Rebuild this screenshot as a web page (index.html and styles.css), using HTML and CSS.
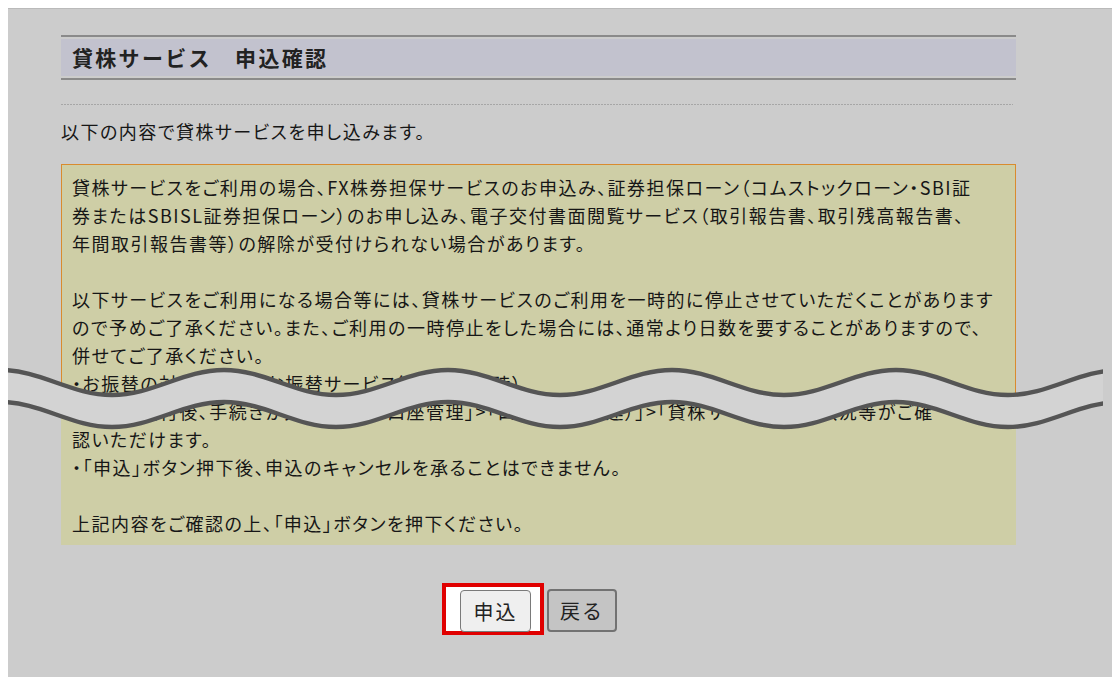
FILE: index.html
```html
<!DOCTYPE html>
<html lang="ja">
<head>
    <meta charset="UTF-8">
    <meta name="viewport" content="width=device-width, initial-scale=1.0">
    <title>貸株サービス 申込確認</title>
    <link rel="stylesheet" href="styles.css">
</head>
<body>
    <div class="page">
        <div class="content">
            <div class="title-bar">
                <h1>貸株サービス　申込確認</h1>
            </div>
            <div class="divider"></div>
            <p class="lead">以下の内容で貸株サービスを申し込みます。</p>

            <div class="notice">
                <div class="notice-top">
                    貸株サービスをご利用の場合、FX株券担保サービスのお申込み、証券担保ローン（コムストックローン・SBI証<br>
                    券またはSBISL証券担保ローン）のお申し込み、電子交付書面閲覧サービス（取引報告書、取引残高報告書、<br>
                    年間取引報告書等）の解除が受付けられない場合があります。<br>
                    <br>
                    以下サービスをご利用になる場合等には、貸株サービスのご利用を一時的に停止させていただくことがあります<br>
                    ので予めご了承ください。また、ご利用の一時停止をした場合には、通常より日数を要することがありますので、<br>
                    併せてご了承ください。<br>
                    ・お振替の対象の場合（お振替サービス等のご利用時）
                </div>
                <div class="notice-bottom">
                    ・お申込受付後、手続きが完了すると「口座管理」&gt;「口座（貸株関連）」&gt;「貸株サービス設定状況等がご確<br>
                    認いただけます。<br>
                    ・「申込」ボタン押下後、申込のキャンセルを承ることはできません。<br>
                    <br>
                    上記内容をご確認の上、「申込」ボタンを押下ください。
                </div>
            </div>

            <div class="actions">
                <span class="marked">
                    <button type="button" class="btn btn-apply">申込</button>
                </span>
                <button type="button" class="btn btn-back">戻る</button>
            </div>
        </div>

        <!-- cut mark: part of the notice is omitted -->
        <svg class="cut" width="1095" height="80" viewBox="0 0 1095 80">
            <path class="cut-fill" d="M -8 15 C 33 15 63 40 104 40 S 175 15 216 15 S 287 40 328 40 S 399 15 440 15 S 511 40 552 40 S 623 15 664 15 S 735 40 776 40 S 847 15 888 15 S 959 40 1000 40 S 1071 15 1112 15 L 1112 47 C 1071 47 1041 72 1000 72 S 929 47 888 47 S 817 72 776 72 S 705 47 664 47 S 593 72 552 72 S 481 47 440 47 S 369 72 328 72 S 257 47 216 47 S 145 72 104 72 S 33 47 -8 47 Z"/>
            <path class="cut-line" d="M -8 15 C 33 15 63 40 104 40 S 175 15 216 15 S 287 40 328 40 S 399 15 440 15 S 511 40 552 40 S 623 15 664 15 S 735 40 776 40 S 847 15 888 15 S 959 40 1000 40 S 1071 15 1112 15"/>
            <path class="cut-line" d="M -8 47 C 33 47 63 72 104 72 S 175 47 216 47 S 287 72 328 72 S 399 47 440 47 S 511 72 552 72 S 623 47 664 47 S 735 72 776 72 S 847 47 888 47 S 959 72 1000 72 S 1071 47 1112 47"/>
        </svg>
    </div>
</body>
</html>
```

FILE: styles.css
```css
body {
    margin: 8px;
    background-color: #fff;
    font-family: "Noto Sans CJK JP", sans-serif;
    color: #161616;
}
.page {
    position: relative;
    height: 669px;
    box-sizing: border-box;
    background-color: #cccccc;
    border-top: 1px solid #bababa;
    padding: 26px 0 0 53px;
}
.content {
    width: 955px;
}
.title-bar {
    border-top: 2px solid #8a8a8a;
    border-bottom: 2px solid #8a8a8a;
    padding: 2px 0;
}
.title-bar h1 {
    margin: 0;
    height: 37px;
    line-height: 37px;
    padding-left: 11px;
    background-color: #c2c2ce;
    font-size: 21px;
    font-weight: bold;
    letter-spacing: 2.3px;
    color: #222;
}
.divider {
    width: 952px;
    height: 1px;
    margin-top: 24px;
    background: repeating-linear-gradient(90deg, #a6a6a6 0 2px, transparent 2px 3px);
}
.lead {
    margin: 12px 0 0;
    font-size: 18px;
    line-height: 28px;
    letter-spacing: 1.5px;
    font-feature-settings: "palt";
}
.notice {
    margin-top: 19px;
    font-size: 18px;
    line-height: 28px;
    letter-spacing: 1.5px;
    font-feature-settings: "palt";
    white-space: nowrap;
}
.notice-top {
    background-color: #cecea6;
    border: 1px solid #d98b2e;
    border-bottom: none;
    padding: 8px 10px 0;
}
.notice-bottom {
    background-color: #cecea6;
    padding: 0 11px 8px;
}
.actions {
    display: flex;
    justify-content: center;
    gap: 16px;
    margin-top: 45px;
}
.marked {
    position: relative;
    display: flex;
}
.marked::before {
    content: '';
    position: absolute;
    left: -18px;
    right: -13px;
    top: -7px;
    bottom: -3px;
    background-color: #fff;
    border: 4px solid #e00000;
}
.btn {
    position: relative;
    height: 42px;
    padding: 0;
    border-radius: 4px;
    font-family: "Noto Sans CJK JP", sans-serif;
    font-size: 20px;
    letter-spacing: 2px;
    color: #222;
    cursor: pointer;
}
.btn-apply {
    width: 71px;
    background-color: #efefef;
    border: 1px solid #7a7a7a;
}
.btn-back {
    width: 70px;
    height: 43px;
    margin-top: -1px;
    background-color: #c4c4c4;
    border: 2px solid #727272;
}
.cut {
    position: absolute;
    left: 0;
    top: 346px;
}
.cut-fill {
    fill: #d3d3d3;
}
.cut-line {
    fill: none;
    stroke: #555;
    stroke-width: 4.5;
}
```
